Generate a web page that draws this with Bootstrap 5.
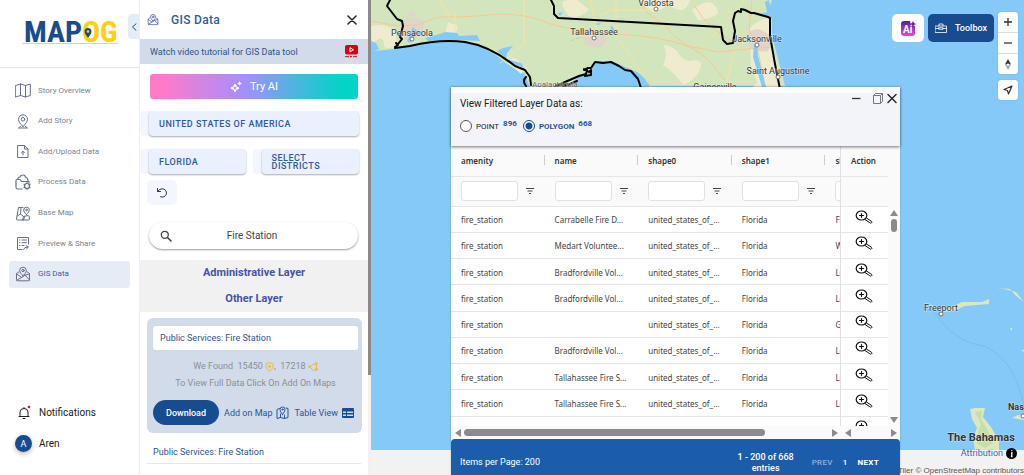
<!DOCTYPE html>
<html lang="en">
<head>
<meta charset="utf-8">
<meta name="viewport" content="width=device-width, initial-scale=1">
<title>MAPOG - GIS Data</title>
<link href="https://cdn.jsdelivr.net/npm/bootstrap@5.3.0/dist/css/bootstrap.min.css" rel="stylesheet">
<style>
  :root { --navy: #184c90; --pale: #d2dbe9; --mist: #eaf0fe; --ink: #202124; }
  body { font-family: Roboto, "Liberation Sans", sans-serif; font-size: 9px; line-height: 12px; color: var(--ink); background: #f2f2f2; }
  svg { display: block; flex: none; }
  button, input { font: inherit; }
  .btn { --bs-btn-font-size: 9px; --bs-btn-line-height: 12px; --bs-btn-padding-x: 0; --bs-btn-padding-y: 0; --bs-btn-border-width: 0; }
  a { color: inherit; text-decoration: none; }
  .line { fill: none; stroke: currentColor; stroke-linecap: round; stroke-linejoin: round; }

  /* left navigation */
  .side { width: 140px; flex: none; background: #fff; border-right: 1px solid #eee; }
  .brand { height: 68px; border-bottom: 1px solid #e6e6e6; padding: 14px 0 0 22px; }
  .side-toggle { right: 0; top: 14px; width: 11px; height: 25px; background: #e6ecf5; color: var(--navy); border-radius: 4px 0 0 4px; }
  .side-nav { height: 211px; margin: 9px 9px 0; }
  .side-nav .nav-link { height: 27px; padding: 0 0 0 6px; gap: 7px; color: #7d8592; font-size: 8px; border-radius: 3px; }
  .side-nav .nav-link.active { background: #e6ecf5; color: #3a6096; }
  .side-nav svg { color: #66708a; }
  .side-foot { font-size: 10px; padding: 0 0 23px 15px; gap: 14px; }
  .side-foot a { gap: 7px; }
  .avatar { width: 17px; height: 17px; background: var(--navy); box-shadow: 0 2px 5px #0004; font-size: 9px; }

  /* GIS data panel */
  .panel { width: 231px; flex: none; padding-right: 3px; background: linear-gradient(#8a8a8a, #8a8a8a) no-repeat right top / 3px 79%, linear-gradient(#f1f1f1, #f1f1f1) no-repeat right top / 3px 100%, #fff; color: #2b5590; }
  .panel-head { height: 39px; padding: 0 11px 0 7px; }
  .panel-title { font-size: 12px; line-height: 16px; font-weight: 500; letter-spacing: .3px; color: #2f5b9c; }
  .tutorial { height: 25px; background: var(--pale); padding: 0 10px; }
  .try-ai { height: 25px; margin: 10px 10px 12px; font-size: 11px; color: #fff; border: 0; border-radius: 3px; background: linear-gradient(90deg, #ff7bca 6%, #a48ffc 45%, #00d5c8 92%); }
  .picks { margin-right: 9px; }
  .picks .row { margin-top: 13px; }
  .picks .col-6 + .col-6 { padding-left: 3px; }
  .pick-wrap { background: #f3f6fe; border-radius: 4px; padding-left: 9px; height: 25px; }
  .pick { width: 100%; height: 25px; padding: 0 10px; text-align: left; font-size: 9px; line-height: 8px; font-weight: 500; letter-spacing: .5px; color: #2f5b9c; background: var(--mist); border: 0; border-radius: 4px; box-shadow: 0 1px 2px #0005; }
  .reset { width: 30px; height: 25px; margin: 6px 0 0 7px; background: #f3f6fe; border: 0; border-radius: 5px; color: #333; }
  .search { height: 27px; margin: 17px 10px 11px 9px; padding: 0 26px 0 11px; border-radius: 14px; box-shadow: 0 1px 2px #0006; color: #444; }
  .search input { border: 0; outline: 0; background: none; text-align: center; font-size: 10px; color: #444; min-width: 0; }
  .layers { background: #f1f1f1; font-size: 11px; line-height: 26px; font-weight: 700; color: #4651a8; }
  .result { background: var(--pale); border-radius: 6px; margin: 6px 6px 0 7px; padding: 8px 4px 8px 6px; }
  .result-name { height: 24px; border: 0; border-radius: 3px; background: #fff; padding: 0 7px; width: 100%; color: inherit; }
  .found { color: #8b8f96; line-height: 17px; margin-top: 8px; }
  .download { width: 66px; height: 25px; background: var(--navy); color: #fff; border-radius: 13px; font-weight: 500; }
  .next-item { margin: 0 7px; padding: 13px 6px 5px; border-bottom: 1px solid #e8e8e8; }

  /* map */
  .map { height: 450px; background: #84c9f8; }
  .map-lbl { fill: #333; stroke: #fff; stroke-opacity: .5; stroke-width: 1px; paint-order: stroke; font-size: 9px; text-anchor: middle; }
  .tools { top: 12px; right: 6px; gap: 4px; }
  .ai-btn { width: 32px; height: 28px; margin-top: 2px; background: #fff; border: 0; border-radius: 5px; }
  .tool-btn { width: 66px; height: 28px; margin-top: 2px; background: var(--navy); color: #fff; border: 0; border-radius: 5px; font-size: 9px; font-weight: 500; }
  .ctl { width: 20px; background: #fff; border-radius: 3px; box-shadow: 0 0 1px #0005; }
  .ctl .btn { height: 20px; width: 20px; border-radius: 0; color: #333; }
  .ctl .btn + .btn { height: 21px; border-top: 1px solid #ddd; }
  .ctls { gap: 6px; }
  .credits { right: 0; bottom: 0; color: #555; font-family: "Liberation Sans", sans-serif; font-size: 8px; line-height: 9px; }
  .attr { color: #3c68b0; font-family: Roboto, sans-serif; font-size: 9px; padding-right: 7px; margin-bottom: 7px; gap: 3px; }

  /* floating data window */
  .win { left: 80px; right: 124px; top: 87px; bottom: 0; background: #fafafa; box-shadow: 0 0 2px #0003; }
  .win-head { height: 59px; background: #f3f4f9; border-top: 6px solid #fcfcfd; box-shadow: 0 1px 3px #0008; padding: 0 3px 0 9px; z-index: 1; }
  .win-head .form-check-input { width: 12px; height: 12px; margin: 0; border: 1px solid #555; background: #fff; }
  .win-head .form-check-input:checked { background: radial-gradient(circle, var(--navy) 3px, #fff 4px); border-color: var(--navy); }
  .win-title { font-size: 10px; line-height: 14px; }
  .kinds { gap: 4px; margin-top: 7px; font-size: 8px; }
  .kinds label { padding-top: 3px; }
  .kinds .on { color: #2357a0; font-weight: 700; }
  .count { font-weight: 700; color: #2357a0; line-height: 12px; align-self: flex-start; margin-right: 2px; }
  .grid-area { height: 280px; }
  .pin, .vbar { flex: none; }
  .data { table-layout: fixed; font-family: "Noto Sans", "Open Sans", sans-serif; font-size: 8px; line-height: 12px; border-collapse: collapse; height: 297px; }
  .data-main { width: 468px; }
  .data-pin { width: 47px; }
  .data th, .data td { padding: 0 9px 0 10px; white-space: nowrap; overflow: hidden; border-bottom: 1px solid #e6e6e6; }
  .data td { background: #fff; padding-top: 2px; color: #444; }
  .data .head-row, .data .filter-row { height: 30px; }
  .data .filter-row td { background: #fafafa; padding-top: 0; }
  .data th { font-weight: 600; color: #333; }
  .data-main th { background: linear-gradient(#ccc, #ccc) no-repeat right 45% / 1px 10px; }
  .data-pin th { padding-right: 0; }
  .data-pin .pin-icon { padding: 0 0 4px 14px; }
  .filter { width: 57px; height: 20px; border: 1px solid #e0e0e0; border-radius: 3px; background: #fff; }
  .filter-box { gap: 7px; }
  .pin { width: 48px; border-left: 1px solid #e0e0e0; }
  .vbar { width: 12px; padding: 64px 1px 3px 0; }
  .hbar { height: 13px; gap: 3px; padding: 0 3px 0 4px; background: #fafafa; }
  .pin-end { margin-left: 37px; }
  .thumb { background: #8b8b8b; border-radius: 4px; }
  .hthumb { width: 301px; height: 7px; }
  .vthumb { width: 6px; height: 13px; margin-top: 3px; }
  .win-foot { height: 36px; background: #1b5dab; color: #fff; border-radius: 4px 4px 0 0; padding: 0 21px 0 9px; line-height: 11px; }
  .range { font-weight: 500; padding: 13px 18px 0 0; }
  .pager { font-weight: 500; font-size: 8px; letter-spacing: .3px; gap: 10px; padding-top: 18px; }
  .per-page { padding-top: 18px; }
</style>
</head>
<body>
<svg width="0" height="0" class="position-absolute" aria-hidden="true">
  <defs>
    <symbol id="mapmail" viewBox="0 0 16 16"><g class="line"><path d="M4 5.800 1.500 7.500v6.300q0 1 1 1h11q1 0 1-1V7.500L12 5.800M1.700 8l5 3.500L10 9l4.500 5M1.800 14.300l5-3M9.500 9.300 14.300 8"/><path d="M8 9.800C6 7.800 4.700 6.300 4.700 4.500a3.300 3.300 0 0 1 6.600 0C11.300 6.300 10 7.800 8 9.800z"/><circle cx="8" cy="4.500" r="1.200"/></g></symbol>
    <symbol id="funnel" viewBox="0 0 10 8"><path class="line" style="stroke-linecap:butt" d="M1 1.500h8M2.500 4h5M4 6.500h2"/></symbol>
    <symbol id="zoomin" viewBox="0 0 18 14"><g class="line"><ellipse cx="6.500" cy="5.500" rx="5.300" ry="4.500" stroke-width="1.200"/><path d="M4.500 5.500h4M6.500 3.700v3.600" stroke-width="1.200"/><path d="M11.500 8l5 3.300q1 1.200-.200 1.700-.800.400-1.500-.300L10 9.500"/></g></symbol>
  </defs>
</svg>
<div class="d-flex vh-100 overflow-hidden">

  <aside class="side d-flex flex-column position-relative">
    <div class="brand">
      <svg width="98" height="34" viewBox="0 0 98 34" role="img" aria-label="MAPOG">
        <text x="2" y="28" font-family="'Liberation Sans Narrow', 'Roboto Condensed', Roboto, sans-serif" font-weight="700" font-size="30" fill="#184c90">MAP<tspan fill="#ffd00f">OG</tspan></text>
        <path d="M0 29.500h96" stroke="#f5d765"/>
        <path d="M66 24c-2-3-3.500-4.500-3.500-6.500a3.500 3.500 0 0 1 7 0c0 2-1.500 3.500-3.500 6.500z" fill="#1f4a7c"/><circle cx="66" cy="17.500" r="1.300" fill="#ffd00f"/>
      </svg>
    </div>
    <button class="btn side-toggle position-absolute d-flex align-items-center justify-content-center" aria-label="Collapse menu"><svg width="6" height="8" viewBox="0 0 6 8"><path class="line" d="M5 .800 1.500 4 5 7.200"/></svg></button>
    <nav class="side-nav nav flex-column flex-nowrap justify-content-between">
      <a class="nav-link d-flex align-items-center" href="#"><svg width="16" height="15" viewBox="0 0 16 15"><path class="line" d="M.700 2.500 5.500 1l5 1.500L15.300 1v11.500l-4.800 1.500-5-1.500-4.800 1.500zM5.500 1v11.500M10.500 2.500V14"/></svg>Story Overview</a>
      <a class="nav-link d-flex align-items-center" href="#"><svg width="16" height="15" viewBox="0 0 16 15"><g class="line"><path d="M8 12.500C5 9.500 3.500 7.500 3.500 5.300a4.500 4.500 0 0 1 9 0C12.500 7.500 11 9.500 8 12.500z"/><circle cx="8" cy="5.300" r="1.800"/><path d="M5.500 12.500 3.500 14h9l-2-1.500"/></g></svg>Add Story</a>
      <a class="nav-link d-flex align-items-center" href="#"><svg width="16" height="15" viewBox="0 0 16 15"><path class="line" d="M3 1.500h6.500L13 5v8.500H3zM9.500 1.500V5H13M8 11V7.500M6.500 8.800 8 7.300l1.500 1.500"/></svg>Add/Upload Data</a>
      <a class="nav-link d-flex align-items-center" href="#"><svg width="16" height="16" viewBox="0 0 16 16"><g class="line" stroke-width="1.200"><path d="M7 15H2.500Q1 15 1 13V6.500q0-1 1-1h3l1.500 2H14V9M2.500 5.500Q3 3 5 3q.500-2 3-2 2 0 2.500 2 2 0 2.500 4"/><circle cx="12" cy="12" r="2.500"/><path d="M12 8.500v1M12 14.500v1M8.900 10.200l1 .600M14.100 13.200l1 .600M8.900 13.800l1-.600M14.100 10.800l1-.600"/></g></svg>Process Data</a>
      <a class="nav-link d-flex align-items-center" href="#"><svg width="16" height="15" viewBox="0 0 16 15"><g class="line"><path d="M8 1.500H3.500L1.500 13q0 1 1 1h11q1 0 1-1l-.500-3M6 1.500 5.500 8 2 10M5.500 8l3 2.500L7.500 14M8.500 10.500 13 9.500M8.500 14l1-3"/><path d="M11.500 8.500C9.500 6.500 8.700 5.300 8.700 4a2.800 2.800 0 0 1 5.600 0c0 1.300-.800 2.500-2.800 4.500z"/><circle cx="11.500" cy="4" r=".8"/></g></svg>Base Map</a>
      <a class="nav-link d-flex align-items-center" href="#"><svg width="16" height="15" viewBox="0 0 16 15"><path class="line" d="M7 13.500H2.500v-12h11V8M4.500 4h.500M7 4h4.500M4.500 6.700h.500M7 6.700h4.500M4.500 9.500h.500M7 9.500h2M8.500 13.500q.500-2.500 4-2.500M11 9.500l2.500 1.500-2 2"/></svg>Preview &amp; Share</a>
      <a class="nav-link active d-flex align-items-center" href="#"><svg width="16" height="16"><use href="#mapmail"/></svg>GIS Data</a>
    </nav>
    <div class="side-foot mt-auto d-flex flex-column">
      <a href="#" class="d-flex align-items-center"><svg width="17" height="17" viewBox="0 0 17 17"><path class="line" stroke="#444" d="M5 12V8q0-3.500 4-3.500T13 8v4M4 12.500h10M8 14.500h2M9 4.500v-1"/><circle cx="14" cy="3" r="1.300" fill="#e3171b"/></svg>Notifications</a>
      <a href="#" class="d-flex align-items-center"><span class="avatar rounded-circle text-white d-flex align-items-center justify-content-center">A</span>Aren</a>
    </div>
  </aside>

  <section class="panel overflow-hidden">
    <header class="panel-head d-flex align-items-center">
      <svg width="12" height="13" color="#4a5fae"><use href="#mapmail"/></svg>
      <h1 class="panel-title mb-0 ms-2 ps-1">GIS Data</h1>
      <button class="btn ms-auto" aria-label="Close panel"><svg width="10" height="10" viewBox="0 0 10 10"><path class="line" stroke="#111" stroke-width="1.500" d="M1 1l8 8M9 1 1 9"/></svg></button>
    </header>
    <a href="#" class="tutorial d-flex align-items-center justify-content-between">Watch video tutorial for GIS Data tool
      <svg width="13" height="13" viewBox="0 0 13 13"><rect width="13" height="9.500" rx="2" fill="#d3040f"/><path d="M5 2.700v4.200L8.500 4.800z" fill="none" stroke="#fff"/><path d="M0 11.700h13" stroke="#d3040f" stroke-dasharray="4 1 2 1"/></svg>
    </a>
    <div class="d-grid"><button class="try-ai btn d-flex align-items-center justify-content-center gap-2"><svg width="12" height="12" viewBox="0 0 12 12"><path d="M5 3q.500 3.500 4 4-3.500.500-4 4-.500-3.500-4-4 3.500-.500 4-4z" fill="none" stroke="#fff" stroke-width="1.300"/><path d="M9.500 0q.300 2.200 2.500 2.500-2.200.300-2.500 2.500Q9.200 2.800 7 2.500 9.200 2.200 9.500 0z" fill="#fff"/></svg>Try AI</button></div>
    <div class="picks">
      <div class="pick-wrap"><button class="pick">UNITED STATES OF AMERICA</button></div>
      <div class="row g-0">
        <div class="col-6 pe-1"><div class="pick-wrap"><button class="pick">FLORIDA</button></div></div>
        <div class="col-6"><div class="pick-wrap"><button class="pick">SELECT<br>DISTRICTS</button></div></div>
      </div>
    </div>
    <button class="reset d-flex align-items-center justify-content-center" aria-label="Reset"><svg width="12" height="12" viewBox="0 0 12 12"><path class="line" d="M1.500 1.500v3h3M1.800 4.300Q3.200 1.700 6.200 1.800A4.200 4.200 0 1 1 4.500 9.800"/></svg></button>
    <label class="search d-flex align-items-center"><svg width="12" height="12" viewBox="0 0 12 12"><circle cx="4.800" cy="4.800" r="3.500" class="line" stroke-width="1.300"/><path class="line" stroke-width="1.600" d="M7.500 7.500 11 11"/></svg><input class="flex-grow-1" type="text" value="Fire Station" aria-label="Search layers"></label>
    <div class="layers text-center"><div>Administrative Layer</div><div>Other Layer</div></div>
    <div class="result">
      <input class="result-name" value="Public Services: Fire Station" aria-label="Layer name">
      <div class="found text-center">
        <div class="d-flex justify-content-center align-items-center">We Found&nbsp; 15450&nbsp;<svg width="9" height="10" viewBox="0 0 9 10" color="#f0b93a"><path class="line" d="M4.500 9.300Q.700 6.500.700 4.300a3.800 3.800 0 0 1 7.600 0Q8.300 6.500 4.500 9.300zM4.500 3v3M3 4.500h3"/></svg>,&nbsp; 17218&nbsp;<svg width="10" height="10" viewBox="0 0 10 10" color="#f0b93a"><path class="line" d="M2 4.500 7 1.500M8.500 3v4M2 5l3 3.500L8 7.500"/><circle cx="1.500" cy="4.700" r="1.200" fill="currentColor"/><circle cx="8" cy="1.700" r="1.200" class="line"/><circle cx="8.300" cy="7.300" r="1.200" class="line"/></svg></div>
        <div>To View Full Data Click On Add On Maps</div>
      </div>
      <div class="d-flex align-items-center justify-content-between pe-1 pt-2">
        <button class="download btn">Download</button>
        <a href="#" class="d-flex align-items-center gap-1">Add on Map<svg width="13" height="13" viewBox="0 0 13 13"><g class="line"><path d="M3.500 2.500 1 3.500v9l3.500-1 4 1 3.500-1v-9L10 2M4.500 8v3.500M8.500 9v3.500"/><path d="M6.500 8.500Q4 5.500 4 3.500a2.500 2.500 0 0 1 5 0Q9 5.500 6.500 8.500z"/><circle cx="6.500" cy="3.500" r=".6"/></g></svg></a>
        <a href="#" class="d-flex align-items-center gap-1">Table View<svg width="12" height="10" viewBox="0 0 12 10"><rect width="12" height="10" rx="1" fill="#184c90"/><path d="M1 3.500h3v1.500H1zM5 3.500h6v1.500H5zM1 6.500h3V8H1zM5 6.500h6V8H5z" fill="#d2dbe9"/></svg></a>
      </div>
    </div>
    <div class="next-item"><a href="#">Public Services: Fire Station</a></div>
  </section>

  <main class="flex-grow-1 position-relative overflow-hidden">
    <div class="map">
      <svg width="100%" height="450" viewBox="371 0 653 450" preserveAspectRatio="xMinYMin slice" aria-label="Map of Florida">
        <path fill="#d2e5bd" d="M371 0V51l14-1 9-1 16-3q30-7 55-4 20 4 36 17 10 9 23 14l6 14h36q14-12 22-14l8-12h15l26 11q12 9 14 14h134L772 35V20l-4-8 4-12z"/>
        <g fill="#efebcf">
          <path d="M371 26q12-3 20 2 7 3 5 8 2 8-4 11-5 3-8-1 0-6-3-8l-9 5zM400 29q10-10 24-8l-2 12-14 6-8-2zM663 45q8 0 14 6 4 8 12 10 10-2 12 2 0 8-6 14-6 6-12 8-8-12-20-20 6-12 0-20zM562 2q8-4 15-2 8 6 12 10-10 8-18 8-8-8-9-16zM640 0h50q-2 8-8 10-8 0-14-6-8 8-16 8-8-6-12-12zM750 28q8-8 18-10 4 10 2 20l8 30 3 19h-22l-8-20zM448 22l10 4-4 12-9-4zM505 60l10-2 12 10-6 6zM692 10q10-8 18-8 8 4 8 12-10 6-20 6zM770 70l5 17h-22z"/>
        </g>
        <g fill="#e0d5c9"><path d="M402 22q6-5 12-4 10 0 10 4 0 8-4 12-6 6-14 6l-7-6zM583 30q8-2 14 2 10 2 10 8-2 6-8 8-8 0-14-4zM747 33q6-4 12-4 10 4 12 10 0 8-3 12-8 2-18-3zM408 13l6-1 2 4-8 1z"/></g>
        <g fill="none" stroke="#f8c98d" stroke-width="1">
          <path d="M371 21l27 5 20-1q20-10 34-8 18 0 48-3 30 0 50 10 30 8 68 10 40 2 70 12l30 6 30-3 25-2M640 0q5 15 25 25 10 15 35 28M752 0l-3 30 8 15 8 42M700 52q20 20 30 35M694 5q14 25 45 40"/>
          <path stroke="#f9e39b" d="M524 0v45l-24 18M455 12v25M616 0v35l35 52M590 0l8 34-23 5M745 0l-40 45M735 50l-10 37M440 0l10 18M655 10l-45 0M600 15l15-6"/>
        </g>
        <g fill="#84c9f8">
          <path d="M371 41l5 2 3 6-8 3zM413 27l4 4 7 3-8 1-6 8-3-2zM425 38q16-4 20-6l12 1 2 3 18-1 3 6-20-1-32 1zM497 51l6-3 10-2-6 7-1 6 15 4 4 5-12-4-6-5zM571 40l14-3-8 1-6 3zM594 24l7-1-2 2zM611 25l3 4-4 7zM558 13l5-1-3 4zM754 44h3l1 12 8 31h-4l-9-30zM765 2l4-2 2 12-3 6-8-4 7-2z"/>
        </g>
        <g fill="none" stroke="#000" stroke-width="2" stroke-linejoin="round" stroke-linecap="round">
          <path d="M390 0l-3 6 10 13 5 2 1 5-3 11 2 2-7 9 15-2q30-7 55-4 25 4 50 24l10 4 5 7 1 8M395 47l3-2-2-2M526 77q-4 4 0 9M551 0l3 6v8l4 4 163 9M721 27l2 13 4 4 6-1 2-12-2-10 2-8 3-2 3 1v-3l4 1 6 3 3 0 14 4 2 1v18l5 28 5 25"/>
          <path d="M555 87l10-5 14-6 7-2 1-4h-3l4-2 3 0 4-6 8 1 8-1 8 4 6 4 6 1 7 8 3 9M584 69l5 3 2-2v5l-6 1M563 87l14-6M556 85l12-1"/>
        </g>
        <g fill="#dce7bd"><path d="M922 302l15 5 4 5 12-1 12-5 24-2v-5l-7 3h-20l-12 6-10 2zM996 288l8 1 12 3 8 10-9-7-5-6zM970 409l5-1 10 0-2 9 8 10 8 14v9h-24l-2-12 4-10-5-9zM1012 418l6-3h6v5zM1021 350h3v2zM1010 328h2v3z"/></g>
        <path fill="#c5deaa" d="M975 412l7-1-1 8 6 10 6 14-8 5-8-4 1-12 3-8z"/>
        <path d="M935 313q20 30 50 33 30 15 39 60" fill="none" stroke="#79bdec"/>
        <g fill="#fff" stroke="#555" stroke-width=".8"><circle cx="412" cy="39" r="2"/><circle cx="594" cy="38" r="2"/><circle cx="656" cy="9" r="2"/><circle cx="757" cy="45" r="2"/><circle cx="778" cy="77" r="2"/><circle cx="941" cy="314" r="2"/><circle cx="1023" cy="416" r="2"/></g>
        <g class="map-lbl">
          <text x="412" y="36">Pensacola</text><text x="594" y="35">Tallahassee</text><text x="656" y="6">Valdosta</text><text x="757" y="42">Jacksonville</text><text x="778" y="74">Saint Augustine</text><text x="715" y="90">Gainesville</text><text x="555" y="87" style="font-size:8px;fill:#666">Apalachicola</text><text x="941" y="311">Freeport</text>
          <text x="981" y="441" style="font-size:11px;font-weight:700">The Bahamas</text><text x="1008" y="410" style="text-anchor:start;font-weight:700">Nassau</text>
        </g>
      </svg>
    </div>
    <div class="credits position-absolute text-end"><a href="#" class="attr d-flex justify-content-end align-items-center">Attribution<svg width="11" height="11" viewBox="0 0 11 11"><circle cx="5.500" cy="5.500" r="5.500"/><path d="M5 5h1l-.500 3.500h1M5.700 2.300v1" stroke="#fff" stroke-width="1.300" fill="none"/></svg></a>© MapTiler © OpenStreetMap contributors</div>

    <div class="tools position-absolute d-flex">
      <button class="ai-btn d-flex align-items-center justify-content-center" aria-label="AI assistant"><svg width="15" height="15" viewBox="0 0 15 15"><defs><linearGradient id="aig" x1="0" y1="0" x2="0" y2="1"><stop stop-color="#55209b"/><stop offset="1" stop-color="#e04be0"/></linearGradient></defs><path fill="url(#aig)" d="M3 0h6l1 4 4 1v7q0 3-3 3H3q-3 0-3-3V3q0-3 3-3z"/><path fill="#6a1fb0" d="M12 0l1 2 2 1-2 1-1 2-1-2-2-1 2-1z"/><text x="2" y="11.500" font-size="10" font-weight="700" fill="#fff">Ai</text></svg></button>
      <button class="tool-btn d-flex align-items-center justify-content-center gap-2"><svg width="12" height="10" viewBox="0 0 12 10"><path class="line" stroke-width=".8" d="M.500 3h11v6.500H.500zM4 3V1h4v2M.500 5.500H4M8 5.500h3.500M4 4.700h4v1.600H4z"/></svg>Toolbox</button>
      <div class="ctls d-flex flex-column">
        <div class="ctl">
          <button class="btn d-flex align-items-center justify-content-center" aria-label="Zoom in"><svg width="8" height="8" viewBox="0 0 8 8"><path d="M0 4h8M4 0v8" stroke="#333" stroke-width="1.300"/></svg></button>
          <button class="btn d-flex align-items-center justify-content-center" aria-label="Zoom out"><svg width="8" height="8" viewBox="0 0 8 8"><path d="M0 4h8" stroke="#333" stroke-width="1.300"/></svg></button>
          <button class="btn d-flex align-items-center justify-content-center" aria-label="Reset north"><svg width="6" height="11" viewBox="0 0 6 11"><path d="M0 5.500 3 0l3 5.500H4.500Q3 3.500 1.500 5.500z" fill="#333"/><path d="M0 5.500 3 11l3-5.500H4.500Q3 8 1.500 5.500z" fill="#aaa"/></svg></button>
        </div>
        <div class="ctl"><button class="btn d-flex align-items-center justify-content-center" aria-label="Locate me"><svg width="10" height="10" viewBox="0 0 10 10"><path class="line" stroke-width="1.200" d="M9 1 1 4.500l3.500 1L5.500 9z"/></svg></button></div>
      </div>
    </div>

    <section class="win position-absolute d-flex flex-column">
      <header class="win-head position-relative d-flex justify-content-between">
        <div class="pt-1">
          <div class="win-title">View Filtered Layer Data as:</div>
          <div class="kinds d-flex align-items-center">
            <input class="form-check-input" type="radio" name="kind" id="kPoint"><label for="kPoint">POINT</label><span class="count">896</span>
            <input class="form-check-input" type="radio" name="kind" id="kPoly" checked><label class="on" for="kPoly">POLYGON</label><span class="count">668</span>
          </div>
        </div>
        <div class="d-flex align-items-start">
          <button class="btn" aria-label="Minimise"><svg width="9" height="11" viewBox="0 0 9 11"><path d="M0 5.500h8.500" stroke="#333" stroke-width="1.300"/></svg></button>
          <button class="btn ms-2 ps-1" aria-label="Maximise"><svg width="10" height="11" viewBox="0 0 10 11"><path fill="none" stroke="#777" d="M.500 2.500h7v8h-7zM.500 2.500l2-2h7v8l-2 2M7.500 2.500l2-2"/></svg></button>
          <button class="btn ms-1" aria-label="Close window"><svg width="10" height="11" viewBox="0 0 10 11"><path class="line" stroke="#111" stroke-width="1.400" d="M1 1.500l8 8M9 1.500l-8 8"/></svg></button>
        </div>
      </header>
      <div class="grid-area d-flex overflow-hidden">
        <div class="flex-grow-1 overflow-hidden"><table class="data data-main"><thead><tr class="head-row"><th>amenity</th><th>name</th><th>shape0</th><th>shape1</th><th>shape2</th></tr><tr class="filter-row" id="filters"></tr></thead><tbody id="rows"></tbody></table></div>
        <div class="pin overflow-hidden"><table class="data data-pin"><thead><tr class="head-row"><th>Action</th></tr><tr class="filter-row"><td></td></tr></thead><tbody id="actions"></tbody></table></div>
        <div class="vbar d-flex flex-column align-items-center"><svg width="8" height="6"><path d="M0 6 4 0l4 6z" fill="#8b8b8b"/></svg><div class="thumb vthumb"></div><svg class="mt-auto" width="8" height="6"><path d="M0 0l4 6 4-6z" fill="#8b8b8b"/></svg></div>
      </div>
      <div class="hbar d-flex align-items-center">
        <svg width="6" height="8"><path d="M6 0 0 4l6 4z" fill="#8b8b8b"/></svg><div class="thumb hthumb"></div><svg class="ms-auto me-1" width="6" height="8"><path d="M0 0l6 4-6 4z" fill="#8b8b8b"/></svg>
        <svg width="6" height="8"><path d="M6 0 0 4l6 4z" fill="#8b8b8b"/></svg><svg class="pin-end" width="6" height="8"><path d="M0 0l6 4-6 4z" fill="#8b8b8b"/></svg>
      </div>
      <footer class="win-foot d-flex justify-content-between">
        <div class="per-page">Items per Page: 200</div>
        <div class="d-flex"><div class="range text-center">1 - 200 of 668<br>entries</div><div class="pager d-flex"><span class="opacity-50">PREV</span><span>1</span><a class="fw-bold" href="#">NEXT</a></div></div>
      </footer>
    </section>
  </main>
</div>
<script src="https://cdn.jsdelivr.net/npm/bootstrap@5.3.0/dist/js/bootstrap.bundle.min.js"></script>
<script>
  const data = [["Carrabelle Fire D...", "Franklin"], ["Medart Voluntee...", "Wakulla"], ["Bradfordville Vol...", "Leon"], ["Bradfordville Vol...", "Leon"], ["", "Gulf"], ["Bradfordville Vol...", "Leon"], ["Tallahassee Fire S...", "Leon"], ["Tallahassee Fire S...", "Leon"], ["Tallahassee Fire S...", "Leon"]];
  document.getElementById("filters").innerHTML = [1, 2, 3, 4, 5].map(n =>
    `<td><div class="filter-box d-flex align-items-center"><input class="filter" aria-label="Filter column ${n}"><svg width="10" height="8" color="#444"><use href="#funnel"/></svg></div></td>`).join("");
  document.getElementById("rows").innerHTML = data.map(([name, county]) =>
    `<tr><td>fire_station</td><td>${name}</td><td>united_states_of_...</td><td>Florida</td><td>${county}</td></tr>`).join("");
  document.getElementById("actions").innerHTML = data.map(() =>
    `<tr><td class="pin-icon"><svg width="18" height="14" color="#111" role="img" aria-label="Zoom to feature"><use href="#zoomin"/></svg></td></tr>`).join("");
</script>
</body>
</html>
